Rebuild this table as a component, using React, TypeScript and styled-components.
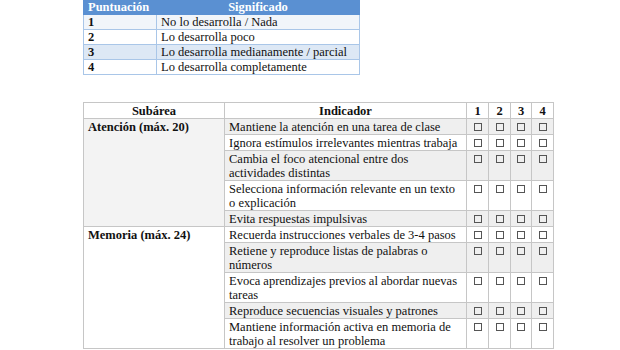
import React from 'react';
import styled, { createGlobalStyle } from 'styled-components';

const GlobalStyle = createGlobalStyle`
  html, body {
    margin: 0;
    padding: 0;
    background: #ffffff;
  }
  body {
    font-family: "Liberation Serif", "Times New Roman", serif;
    font-size: 12.5px;
    color: #111111;
  }
`;

const Page = styled.div`
  width: 620px;
  height: 350px;
  overflow: hidden;
  display: flex;
  flex-direction: column;
  align-items: flex-start;
  padding-left: 83px;
  box-sizing: border-box;
`;

/* escala de puntuación */
const ScaleTable = styled.table`
  border-collapse: collapse;
  table-layout: fixed;
  width: 276px;
  margin-top: -2px;
  line-height: 14px;
`;

const ScaleHeadCell = styled.th<{ $align?: string }>`
  background: #5a90d2;
  color: #ffffff;
  font-weight: bold;
  text-align: ${(p) => p.$align || 'center'};
  padding: 1px 4px 0;
  border: 1px solid #5a90d2;
`;

const ScaleRow = styled.tr<{ $band?: 'light' | 'blue' }>`
  background: ${(p) =>
    p.$band === 'blue' ? '#dde8f5' : p.$band === 'light' ? '#f1f5fa' : '#ffffff'};
`;

const ScaleCell = styled.td<{ $bold?: boolean }>`
  padding: 0 4px;
  border: 1px solid #a9c6e8;
  font-weight: ${(p) => (p.$bold ? 'bold' : 'normal')};
  white-space: nowrap;
`;

/* rúbrica por subárea */
const RubricTable = styled.table`
  border-collapse: collapse;
  table-layout: fixed;
  width: 470px;
  margin-top: 27px;
  line-height: 14px;
`;

const HeadCell = styled.th`
  font-weight: bold;
  text-align: center;
  padding: 1px 4px 0;
  border: 1px solid #c6c6c6;
  background: #ffffff;
`;

const Row = styled.tr<{ $shaded?: boolean }>`
  background: ${(p) => (p.$shaded ? '#efefef' : '#ffffff')};
`;

const AreaCell = styled.td<{ $shaded?: boolean }>`
  vertical-align: top;
  font-weight: bold;
  padding: 1px 4px 0;
  border: 1px solid #c6c6c6;
  background: ${(p) => (p.$shaded ? '#f3f3f3' : '#ffffff')};
`;

const IndicatorCell = styled.td`
  vertical-align: top;
  padding: 1px 4px 0;
  border: 1px solid #c6c6c6;
`;

const CheckCell = styled.td`
  vertical-align: top;
  padding: 4px 0 0;
  border: 1px solid #c6c6c6;
`;

const CheckBox = styled.span`
  display: block;
  margin: 0 auto;
  width: 8px;
  height: 8px;
  border: 1px solid #555555;
  box-sizing: border-box;
`;

const scale = [
  { n: '1', text: 'No lo desarrolla / Nada', band: 'light' as const },
  { n: '2', text: 'Lo desarrolla poco' },
  { n: '3', text: 'Lo desarrolla medianamente / parcial', band: 'blue' as const },
  { n: '4', text: 'Lo desarrolla completamente' },
];

const areas = [
  {
    name: 'Atención (máx. 20)',
    items: [
      'Mantiene la atención en una tarea de clase',
      'Ignora estímulos irrelevantes mientras trabaja',
      'Cambia el foco atencional entre dos actividades distintas',
      'Selecciona información relevante en un texto o explicación',
      'Evita respuestas impulsivas',
    ],
  },
  {
    name: 'Memoria (máx. 24)',
    items: [
      'Recuerda instrucciones verbales de 3-4 pasos',
      'Retiene y reproduce listas de palabras o números',
      'Evoca aprendizajes previos al abordar nuevas tareas',
      'Reproduce secuencias visuales y patrones',
      'Mantiene información activa en memoria de trabajo al resolver un problema',
    ],
  },
];

const Checks = () => (
  <>
    {[1, 2, 3, 4].map((k) => (
      <CheckCell key={k}>
        <CheckBox />
      </CheckCell>
    ))}
  </>
);

export default function App() {
  let rowIndex = 0;

  return (
    <Page>
      <GlobalStyle />
      <ScaleTable>
        <colgroup>
          <col style={{ width: 73 }} />
          <col style={{ width: 203 }} />
        </colgroup>
        <thead>
          <tr>
            <ScaleHeadCell $align="left">Puntuación</ScaleHeadCell>
            <ScaleHeadCell>Significado</ScaleHeadCell>
          </tr>
        </thead>
        <tbody>
          {scale.map((s) => (
            <ScaleRow key={s.n} $band={s.band}>
              <ScaleCell $bold>{s.n}</ScaleCell>
              <ScaleCell>{s.text}</ScaleCell>
            </ScaleRow>
          ))}
        </tbody>
      </ScaleTable>

      <RubricTable>
        <colgroup>
          <col style={{ width: 141 }} />
          <col style={{ width: 242 }} />
          <col style={{ width: 22 }} />
          <col style={{ width: 22 }} />
          <col style={{ width: 21 }} />
          <col style={{ width: 22 }} />
        </colgroup>
        <thead>
          <tr>
            <HeadCell>Subárea</HeadCell>
            <HeadCell>Indicador</HeadCell>
            <HeadCell>1</HeadCell>
            <HeadCell>2</HeadCell>
            <HeadCell>3</HeadCell>
            <HeadCell>4</HeadCell>
          </tr>
        </thead>
        <tbody>
          {areas.map((area) =>
            area.items.map((item, i) => {
              rowIndex += 1;
              const shaded = rowIndex % 2 === 1;
              return (
                <Row key={item} $shaded={shaded}>
                  {i === 0 && (
                    <AreaCell rowSpan={area.items.length} $shaded={shaded}>
                      {area.name}
                    </AreaCell>
                  )}
                  <IndicatorCell>{item}</IndicatorCell>
                  <Checks />
                </Row>
              );
            })
          )}
        </tbody>
      </RubricTable>
    </Page>
  );
}
